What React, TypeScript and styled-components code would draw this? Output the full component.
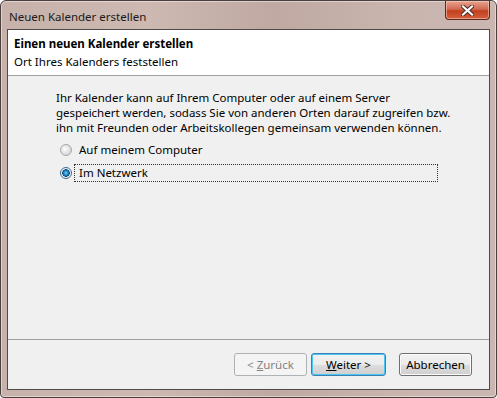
import React from 'react';
import styled, { createGlobalStyle } from 'styled-components';

const GlobalStyle = createGlobalStyle`
  html, body {
    margin: 0;
    padding: 0;
    background: #ffffff;
  }
  body {
    font-family: "Noto Sans", "Open Sans", sans-serif;
  }
`;

const Window = styled.div`
  width: 497px;
  height: 398px;
  box-sizing: border-box;
  display: flex;
  flex-direction: column;
  border: 1px solid #4a3f3d;
  border-radius: 6px 6px 4px 4px;
  background: linear-gradient(90deg, #c7b1ab 0%, #cdb8b2 30%, #bfa9a2 55%, #c9b4ae 80%, #cbb7b2 100%);
  box-shadow: inset 0 0 0 1px rgba(255, 255, 255, 0.45);
  overflow: hidden;
`;

const TitleBar = styled.div`
  height: 28px;
  display: flex;
  align-items: flex-start;
  justify-content: space-between;
  padding-left: 8px;
  padding-right: 6px;
`;

const Title = styled.span`
  margin-top: 8px;
  font-size: 11.5px;
  color: #1a1a1a;
`;

const CloseButton = styled.div`
  width: 45px;
  height: 19px;
  box-sizing: border-box;
  display: flex;
  align-items: center;
  justify-content: center;
  border: 1px solid #5a2a22;
  border-top: none;
  border-radius: 0 0 4px 4px;
  background: linear-gradient(180deg, #e7a390 0%, #d36b53 45%, #c2401f 55%, #d65f3d 100%);
  box-shadow: inset 0 0 0 1px rgba(255, 220, 210, 0.5);
`;

const Client = styled.div`
  flex: 1;
  margin: 0 6px 7px 6px;
  border: 1px solid #4f4a49;
  background: #f0f0f0;
  display: flex;
  flex-direction: column;
`;

const Header = styled.div`
  height: 46px;
  background: #ffffff;
  border-bottom: 1px solid #a0a0a0;
  padding: 6px 0 0 6px;
  box-sizing: border-box;
  display: flex;
  flex-direction: column;
  gap: 3px;
`;

const HeaderTitle = styled.span`
  font-size: 11.5px;
  font-weight: 700;
  color: #000000;
`;

const HeaderSub = styled.span`
  font-size: 11.5px;
  color: #000000;
`;

const Body = styled.div`
  flex: 1;
  padding: 14px 0 0 48px;
  display: flex;
  flex-direction: column;
`;

const Paragraph = styled.p`
  margin: 0 0 1px 0;
  font-size: 11.5px;
  line-height: 15px;
  color: #000000;
  width: 400px;
`;

const Option = styled.label`
  display: flex;
  align-items: center;
  height: 18px;
  margin-top: 5px;
  margin-left: 4px;
`;

const RadioCircle = styled.span<{ $checked?: boolean }>`
  width: 12px;
  height: 12px;
  box-sizing: border-box;
  border-radius: 50%;
  border: 1px solid ${p => (p.$checked ? '#3a6c96' : '#a8a8a8')};
  background: ${p =>
    p.$checked
      ? 'radial-gradient(circle at 50% 50%, #7fd0f5 0%, #1e86c4 30%, #134f7c 50%, #e8eef2 57%, #fafafa 100%)'
      : 'radial-gradient(circle at 40% 40%, #ffffff 0%, #e2e2e2 50%, #c9c9c9 100%)'};
  margin-right: 2px;
  flex-shrink: 0;
`;

const OptionText = styled.span<{ $focused?: boolean }>`
  box-sizing: border-box;
  height: 18px;
  line-height: 16px;
  font-size: 11.5px;
  color: #000000;
  padding: 0 4px;
  border: 1px dotted ${p => (p.$focused ? '#333333' : 'transparent')};
  width: ${p => (p.$focused ? '364px' : 'auto')};
`;

const Footer = styled.div`
  height: 50px;
  border-top: 1px solid #a0a0a0;
  box-sizing: border-box;
  display: flex;
  align-items: flex-start;
  justify-content: flex-end;
  padding: 13px 17px 0 0;
`;

const Button = styled.button<{ $primary?: boolean }>`
  height: 23px;
  width: ${p => (p.$primary ? '75px' : '73px')};
  margin-left: ${p => (p.$primary ? '4px' : '13px')};
  box-sizing: border-box;
  font-family: "Noto Sans", "Open Sans", sans-serif;
  font-size: 11.5px;
  color: #000000;
  border-radius: 3px;
  border: 1px solid ${p => (p.$primary ? '#3c7fb1' : '#707070')};
  background: linear-gradient(180deg, #f2f2f2 0%, #ebebeb 50%, #dddddd 51%, #cfcfcf 100%);
  box-shadow: inset 0 0 0 1px ${p => (p.$primary ? '#48c6f4' : '#fcfcfc')};
  padding: 0;
  &:first-child {
    margin-left: 0;
  }
  &:disabled {
    color: #838383;
    border-color: #adb2b5;
    background: #f4f4f4;
    box-shadow: none;
  }
`;

const Key = styled.span`
  text-decoration: underline;
`;

export default function App() {
  return (
    <>
      <GlobalStyle />
      <Window>
        <TitleBar>
          <Title>Neuen Kalender erstellen</Title>
          <CloseButton>
            <svg width="13" height="11" viewBox="0 0 13 11">
              <path
                d="M2 1.5 L6.5 5.5 L11 1.5 M2 9.5 L6.5 5.5 L11 9.5"
                stroke="#4a2a25"
                strokeWidth="4"
                fill="none"
                strokeLinecap="square"
              />
              <path
                d="M2 1.5 L6.5 5.5 L11 1.5 M2 9.5 L6.5 5.5 L11 9.5"
                stroke="#ffffff"
                strokeWidth="2.2"
                fill="none"
                strokeLinecap="square"
              />
            </svg>
          </CloseButton>
        </TitleBar>
        <Client>
          <Header>
            <HeaderTitle>Einen neuen Kalender erstellen</HeaderTitle>
            <HeaderSub>Ort Ihres Kalenders feststellen</HeaderSub>
          </Header>
          <Body>
            <Paragraph>
              Ihr Kalender kann auf Ihrem Computer oder auf einem Server gespeichert werden, sodass Sie von anderen
              Orten darauf zugreifen bzw. ihn mit Freunden oder Arbeitskollegen gemeinsam verwenden können.
            </Paragraph>
            <Option>
              <RadioCircle />
              <OptionText>Auf meinem Computer</OptionText>
            </Option>
            <Option>
              <RadioCircle $checked />
              <OptionText $focused>Im Netzwerk</OptionText>
            </Option>
          </Body>
          <Footer>
            <Button disabled>
              &lt; <Key>Z</Key>urück
            </Button>
            <Button $primary>
              <Key>W</Key>eiter &gt;
            </Button>
            <Button>Abbrechen</Button>
          </Footer>
        </Client>
      </Window>
    </>
  );
}
